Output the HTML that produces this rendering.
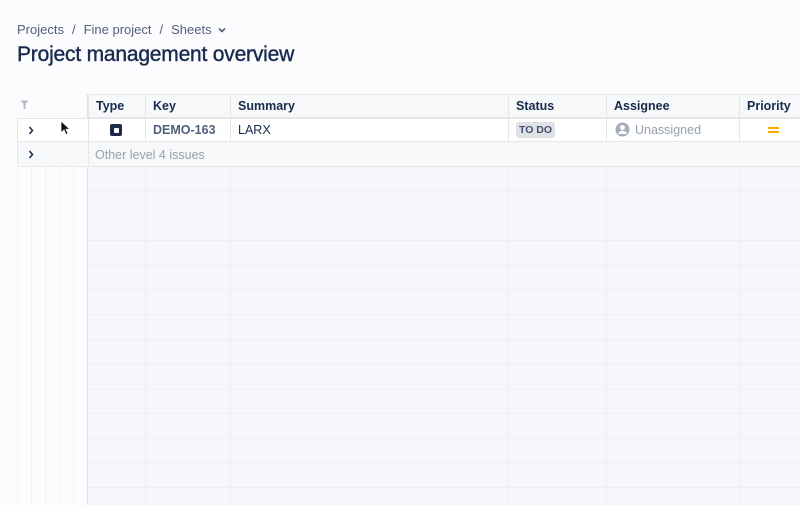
<!DOCTYPE html>
<html><head><style>
*{margin:0;padding:0;box-sizing:border-box}
body{width:800px;height:505px;overflow:hidden;background:#fcfcfe;font-family:"Liberation Sans",sans-serif;position:relative;color:#172b4d}
.a{position:absolute}
.crumb{left:17px;top:22px;font-size:13px;color:#505f79;white-space:nowrap}
.crumb span{margin:0 8px}
h1{position:absolute;left:17px;top:43px;font-size:21px;font-weight:normal;color:#172b4d;letter-spacing:-0.2px;-webkit-text-stroke:0.4px #172b4d}
.hd{font-weight:bold;font-size:12.5px;color:#172b4d;top:99px}
.cell{font-size:12.5px;top:123px}
.bl{background:#e4e6ea}
</style></head><body>
<div class="a crumb">Projects<span>/</span>Fine project<span>/</span>Sheets <svg width="10" height="8" viewBox="0 0 10 8" style="margin-left:2px"><path d="M2 2.5l3 3 3-3" stroke="#505f79" stroke-width="1.6" fill="none"/></svg></div>
<h1>Project management overview</h1>

<div class="a" style="left:88px;top:167px;width:712px;height:338px;background-color:#f6f7fa;background-image:repeating-linear-gradient(to bottom,transparent 0,transparent 23.7px,#eeeff2 23.7px,#eeeff2 24.7px)"></div>
<div class="a" style="left:145px;top:167px;width:1px;height:338px;background:#eff0f3"></div>
<div class="a" style="left:230px;top:167px;width:1px;height:338px;background:#eff0f3"></div>
<div class="a" style="left:508px;top:167px;width:1px;height:338px;background:#eff0f3"></div>
<div class="a" style="left:606px;top:167px;width:1px;height:338px;background:#eff0f3"></div>
<div class="a" style="left:739px;top:167px;width:1px;height:338px;background:#eff0f3"></div>
<div class="a" style="left:17px;top:167px;width:1px;height:338px;background:#f2f3f5"></div>
<div class="a" style="left:31px;top:167px;width:1px;height:338px;background:#f2f3f5"></div>
<div class="a" style="left:45px;top:167px;width:1px;height:338px;background:#f2f3f5"></div>
<div class="a" style="left:59px;top:167px;width:1px;height:338px;background:#f2f3f5"></div>
<div class="a" style="left:73px;top:167px;width:1px;height:338px;background:#f2f3f5"></div>
<div class="a" style="left:87px;top:94px;width:1px;height:411px;background:#dfe1e5"></div>

<div class="a" style="left:88px;top:94px;width:720px;height:24px;background:#f7f8fa;border:1px solid #e4e6ea;border-radius:4px 0 0 0"></div>
<div class="a bl" style="left:145px;top:94px;width:1px;height:72px"></div>
<div class="a bl" style="left:230px;top:94px;width:1px;height:48px"></div>
<div class="a bl" style="left:508px;top:94px;width:1px;height:48px"></div>
<div class="a bl" style="left:606px;top:94px;width:1px;height:48px"></div>
<div class="a bl" style="left:739px;top:94px;width:1px;height:48px"></div>
<svg class="a" style="left:20px;top:100px" width="9" height="10" viewBox="0 0 9 10"><path d="M0.5 0.5h8L5.5 4v5h-2V4z" fill="#b3b9c4"/></svg>
<div class="a hd" style="left:96px">Type</div>
<div class="a hd" style="left:153px">Key</div>
<div class="a hd" style="left:238px">Summary</div>
<div class="a hd" style="left:516px">Status</div>
<div class="a hd" style="left:614px">Assignee</div>
<div class="a hd" style="left:747px">Priority</div>

<div class="a" style="left:17px;top:118px;width:800px;height:24px;background:#fff;border:1px solid #e4e6ea;border-radius:3px 0 0 0"></div>
<div class="a bl" style="left:88px;top:118px;width:1px;height:48px"></div>
<div class="a bl" style="left:145px;top:118px;width:1px;height:24px"></div>
<div class="a bl" style="left:230px;top:118px;width:1px;height:24px"></div>
<div class="a bl" style="left:508px;top:118px;width:1px;height:24px"></div>
<div class="a bl" style="left:606px;top:118px;width:1px;height:24px"></div>
<div class="a bl" style="left:739px;top:118px;width:1px;height:24px"></div>
<svg class="a" style="left:28px;top:126px" width="6" height="9" viewBox="0 0 6 9"><path d="M1.5 1l3 3.5-3 3.5" stroke="#172b4d" stroke-width="1.5" fill="none"/></svg>
<svg class="a" style="left:60px;top:120px" width="12" height="16" viewBox="0 0 12 16"><path d="M1 1v12l3-3 2 4.5 2-1-2-4.2h4z" fill="#111" stroke="#fff" stroke-width="0.8"/></svg>
<div class="a" style="left:110px;top:124px;width:12px;height:12px;background:#1d2a4a;border-radius:2px"><div style="position:absolute;left:3.5px;top:3.5px;width:5px;height:5px;background:#fff;border-radius:1px"></div></div>
<div class="a cell" style="left:153px;color:#505f79;font-weight:bold">DEMO-163</div>
<div class="a cell" style="left:238px;color:#172b4d">LARX</div>
<div class="a" style="left:516px;top:122px;width:39px;height:16px;background:#dfe1e6;border-radius:3px;font-size:10.5px;font-weight:bold;color:#42526e;text-align:center;line-height:16px">TO DO</div>
<svg class="a" style="left:615px;top:122px" width="15" height="15" viewBox="0 0 15 15"><circle cx="7.5" cy="7.5" r="7" fill="#a5adba"/><circle cx="7.5" cy="5.5" r="2.5" fill="#fff"/><path d="M3 12c1-2.5 3-3.2 4.5-3.2S11 9.5 12 12z" fill="#fff"/></svg>
<div class="a cell" style="left:635px;color:#97a0af">Unassigned</div>
<div class="a" style="left:768px;top:127px;width:11px;height:2px;background:#ffab00"></div>
<div class="a" style="left:768px;top:131px;width:11px;height:2px;background:#ffab00"></div>

<div class="a" style="left:17px;top:142px;width:800px;height:25px;background:#f7f8fa;border:1px solid #e4e6ea;border-top:none;border-radius:0 0 0 3px"></div>
<div class="a bl" style="left:88px;top:142px;width:1px;height:24px"></div>
<svg class="a" style="left:28px;top:150px" width="6" height="9" viewBox="0 0 6 9"><path d="M1.5 1l3 3.5-3 3.5" stroke="#172b4d" stroke-width="1.5" fill="none"/></svg>
<div class="a" style="left:95px;top:148px;font-size:12.5px;color:#97a0af">Other level 4 issues</div>
</body></html>
